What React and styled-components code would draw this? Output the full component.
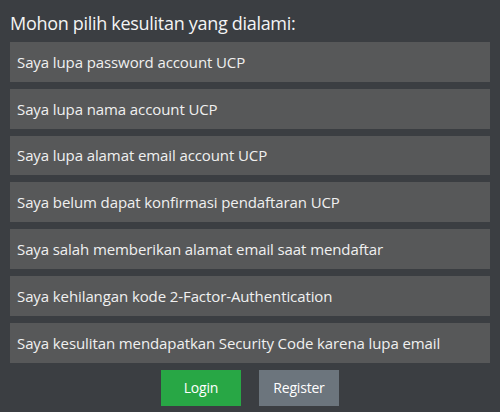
import React from "react";
import styled, { createGlobalStyle } from "styled-components";

const Global = createGlobalStyle`
  html, body { margin: 0; padding: 0; background: #3b3e42; }
  body { font-family: "Open Sans", "Noto Sans", sans-serif; }
`;

const Page = styled.div`
  width: 500px;
  height: 412px;
  box-sizing: border-box;
  padding: 11px 10px 0 10px;
  background: #3b3e42;
  color: #f2f2f2;
  display: flex;
  flex-direction: column;
`;

const Heading = styled.div`
  font-size: 18px;
  letter-spacing: -0.3px;
  line-height: 24px;
  height: 31px;
  color: #f4f4f4;
`;

const List = styled.div`
  display: flex;
  flex-direction: column;
  gap: 7px;
`;

const Item = styled.div`
  height: 39.8px;
  box-sizing: border-box;
  padding: 0 7px;
  display: flex;
  align-items: center;
  background: #575859;
  font-size: 15px;
  letter-spacing: -0.1px;
  color: #f0f0f0;
  cursor: pointer;
`;

const Actions = styled.div`
  display: flex;
  justify-content: center;
  gap: 18px;
  margin-top: 7.4px;
`;

const Button = styled.button`
  width: 80px;
  height: 36px;
  border: none;
  border-radius: 0;
  font-family: inherit;
  font-size: 14px;
  letter-spacing: -0.2px;
  color: #ffffff;
  background: ${(p) => (p.$variant === "primary" ? "#28a745" : "#6c757d")};
  padding: 0;
`;

const items = [
  "Saya lupa password account UCP",
  "Saya lupa nama account UCP",
  "Saya lupa alamat email account UCP",
  "Saya belum dapat konfirmasi pendaftaran UCP",
  "Saya salah memberikan alamat email saat mendaftar",
  "Saya kehilangan kode 2-Factor-Authentication",
  "Saya kesulitan mendapatkan Security Code karena lupa email",
];

export default function App() {
  return (
    <>
      <Global />
      <Page>
        <Heading>Mohon pilih kesulitan yang dialami:</Heading>
        <List>
          {items.map((t) => (
            <Item key={t}>{t}</Item>
          ))}
        </List>
        <Actions>
          <Button $variant="primary">Login</Button>
          <Button>Register</Button>
        </Actions>
      </Page>
    </>
  );
}
